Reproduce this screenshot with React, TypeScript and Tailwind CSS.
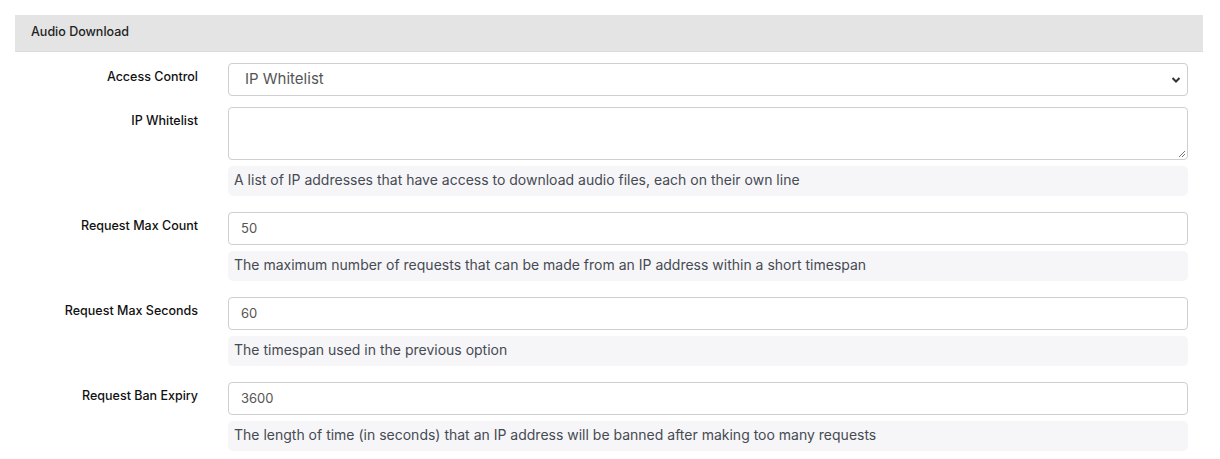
import React from "react";

const font = { fontFamily: "Inter, 'Noto Sans', sans-serif" };

function Row({ label, children, help }: { label: string; children: React.ReactNode; help?: string }) {
  return (
    <div className="flex">
      <div className="w-[198px] shrink-0 pr-[15px] pt-[4px] text-right text-[12.5px] font-medium leading-[20px] text-[#111]">
        {label}
      </div>
      <div className="flex-1 px-[15px]">
        {children}
        {help && (
          <div className="mt-[6px] h-[30px] rounded-[5px] bg-[#f6f6f8] pl-[6px] text-[14px] leading-[28px] text-[#464a53]">
            {help}
          </div>
        )}
      </div>
    </div>
  );
}

function Input({ value }: { value: string }) {
  return (
    <div className="h-[33px] rounded-[4px] border border-[#cfcfcf] bg-white pl-[12px] text-[13px] leading-[31px] text-[#555]">
      {value}
    </div>
  );
}

export default function App() {
  return (
    <div className="bg-white p-[15px] pr-[17px]" style={font}>
      <div className="h-[37px] border-b border-[#dcdcdc] bg-[#e4e4e4] pl-[16px] text-[12.5px] font-medium leading-[34px] text-[#222]">
        Audio Download
      </div>
      <div className="mt-[11px] flex flex-col">
        <Row label="Access Control">
          <div className="relative flex h-[33px] items-center rounded-[4px] border border-[#cfcfcf] bg-white pl-[16px] text-[15px] text-[#555]">
            IP Whitelist
            <svg className="absolute right-[6px] top-[12px]" width="10" height="8" viewBox="0 0 10 8">
              <path d="M1.5 2 L5 5.5 L8.5 2" fill="none" stroke="#333" strokeWidth="2" />
            </svg>
          </div>
        </Row>
        <div className="h-[11px]" />
        <Row label="IP Whitelist" help="A list of IP addresses that have access to download audio files, each on their own line">
          <div className="relative h-[53px] rounded-[4px] border border-[#cfcfcf] bg-white">
            <svg className="absolute bottom-[1px] right-[1px]" width="8" height="8" viewBox="0 0 8 8">
              <path d="M7 1 L1 7 M7 4 L4 7" stroke="#777" strokeWidth="1" />
            </svg>
          </div>
        </Row>
        <div className="h-[16px]" />
        <Row label="Request Max Count" help="The maximum number of requests that can be made from an IP address within a short timespan">
          <Input value="50" />
        </Row>
        <div className="h-[16px]" />
        <Row label="Request Max Seconds" help="The timespan used in the previous option">
          <Input value="60" />
        </Row>
        <div className="h-[16px]" />
        <Row label="Request Ban Expiry" help="The length of time (in seconds) that an IP address will be banned after making too many requests">
          <Input value="3600" />
        </Row>
      </div>
    </div>
  );
}
